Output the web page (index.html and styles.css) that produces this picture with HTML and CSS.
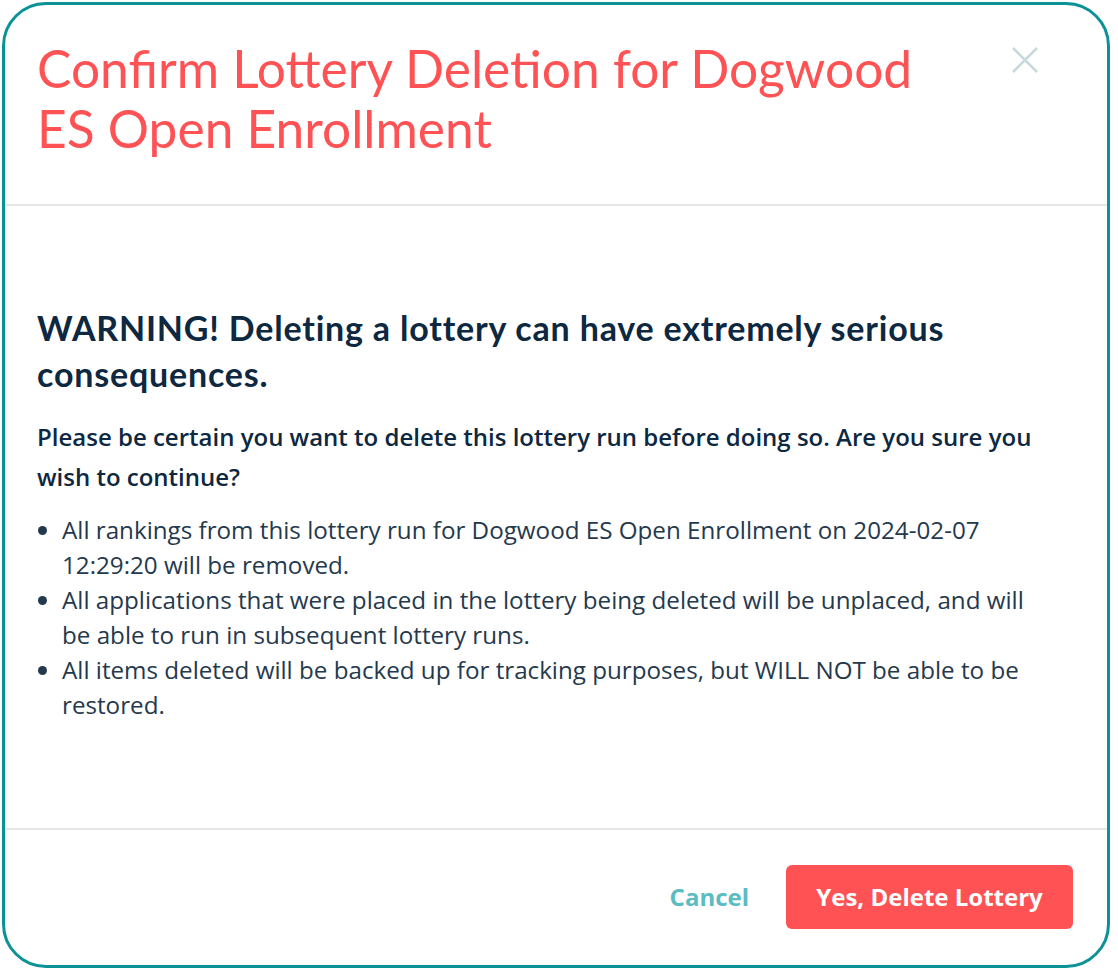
FILE: index.html
```html
<!DOCTYPE html>
<html lang="en">
<head>
    <meta charset="UTF-8">
    <meta name="viewport" content="width=device-width, initial-scale=1.0">
    <title>Confirm Lottery Deletion</title>
    <link rel="stylesheet" href="styles.css">
</head>
<body>

    <div class="modal">
        <div class="modal-header">
            <h1 class="modal-title">Confirm Lottery Deletion for Dogwood ES Open Enrollment</h1>
            <button class="close-btn" aria-label="Close">
                <svg width="28" height="28" viewBox="0 0 28 28">
                    <path d="M2 2 L26 26 M26 2 L2 26" stroke="#c6dadd" stroke-width="2.6" fill="none"/>
                </svg>
            </button>
        </div>

        <div class="modal-body">
            <h2 class="warning">WARNING! Deleting a lottery can have extremely serious consequences.</h2>
            <p class="confirm-text">Please be certain you want to delete this lottery run before doing so. Are you sure you wish to continue?</p>
            <ul class="consequences">
                <li>All rankings from this lottery run for Dogwood ES Open Enrollment on 2024-02-07 12:29:20 will be removed.</li>
                <li>All applications that were placed in the lottery being deleted will be unplaced, and will be able to run in subsequent lottery runs.</li>
                <li>All items deleted will be backed up for tracking purposes, but WILL NOT be able to be restored.</li>
            </ul>
        </div>

        <div class="modal-footer">
            <button class="btn-cancel">Cancel</button>
            <button class="btn-delete">Yes, Delete Lottery</button>
        </div>
    </div>

</body>
</html>
```

FILE: styles.css
```css
body {
    font-family: "Open Sans", Arial, sans-serif;
    background-color: #fff;
    margin: 0;
    padding: 2px;
}
.modal {
    width: 1108px;
    height: 966px;
    box-sizing: border-box;
    border: 3px solid #0a9297;
    border-radius: 44px;
    display: flex;
    flex-direction: column;
    background-color: #fff;
}
.modal-header {
    display: flex;
    justify-content: space-between;
    align-items: flex-start;
    padding: 33px 68px 0 32px;
    height: 201px;
    box-sizing: border-box;
    border-bottom: 2px solid #e6e6e6;
}
.modal-title {
    margin: 0;
    font-family: Lato, "Open Sans", sans-serif;
    font-weight: 400;
    font-size: 51.5px;
    line-height: 60px;
    color: #ff5254;
    max-width: 900px;
}
.close-btn {
    background: none;
    border: 0;
    padding: 0;
    margin-top: 8px;
    cursor: pointer;
}
.modal-body {
    flex: 1;
    padding: 99px 57px 0 32px;
    color: #0d2840;
}
.warning {
    margin: 0 0 20px;
    font-family: Lato, "Open Sans", sans-serif;
    font-weight: 700;
    font-size: 34px;
    letter-spacing: 0.8px;
    line-height: 46px;
}
.confirm-text {
    margin: 0 0 15px;
    font-weight: 600;
    font-size: 24px;
    line-height: 40px;
}
.consequences {
    margin: 0;
    padding-left: 25px;
    font-size: 24.2px;
    line-height: 35px;
    color: #25394d;
}
.modal-footer {
    display: flex;
    justify-content: flex-end;
    align-items: center;
    gap: 37px;
    height: 137px;
    padding: 0 34px 2px 0;
    box-sizing: border-box;
    border-top: 2px solid #e6e6e6;
}
.btn-cancel {
    background: none;
    border: 0;
    padding: 0;
    font-family: "Open Sans", Arial, sans-serif;
    font-weight: 700;
    font-size: 24px;
    color: #5bbcc1;
    cursor: pointer;
}
.btn-delete {
    background-color: #ff5254;
    border: 0;
    border-radius: 6px;
    width: 287px;
    height: 64px;
    font-family: "Open Sans", Arial, sans-serif;
    font-weight: 700;
    font-size: 24px;
    color: #fff;
    cursor: pointer;
}
```
